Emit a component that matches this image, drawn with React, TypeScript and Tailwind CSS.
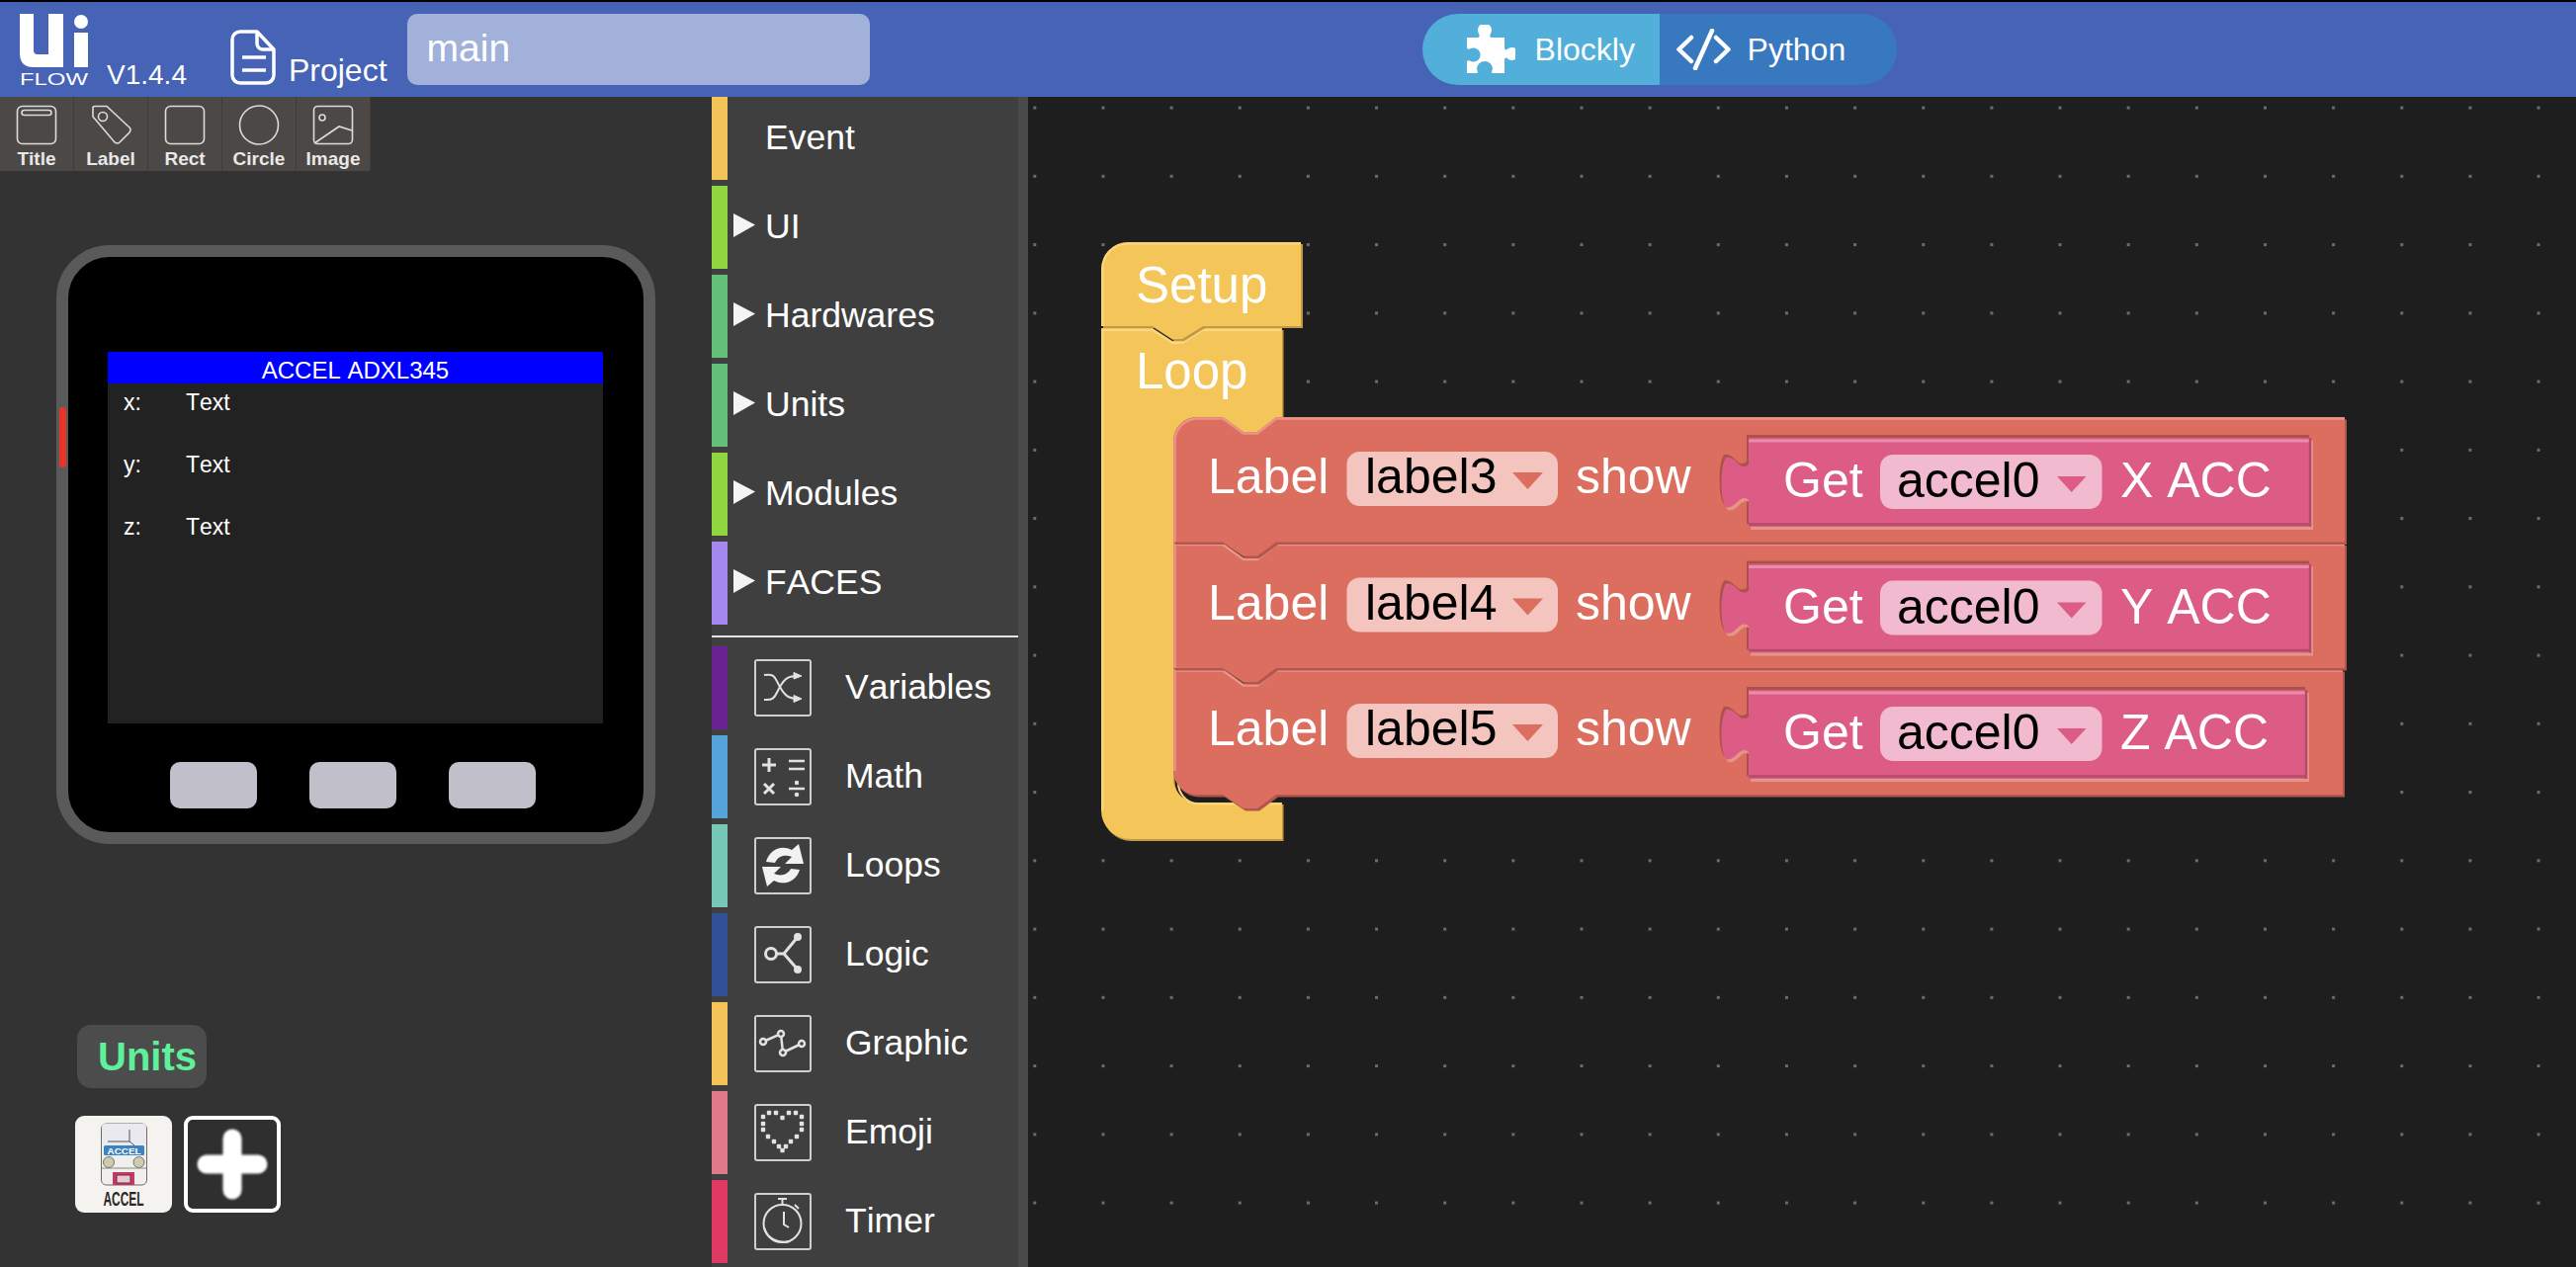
const TILES = [
  { name: "Title", icon: <><rect x="1.5" y="1.5" width="39" height="38" rx="5" /><rect x="6" y="5.5" width="30" height="5" rx="2.5" /></> },
  { name: "Label", icon: <><path d="M3,3 Q3,1.5 5,1.5 H17 L40,23 Q42,25 40,28 L30,38 Q28,40 25,38 L3,12 Z" /><circle cx="13" cy="12" r="4.5" /></> },
  { name: "Rect", icon: <rect x="1.5" y="1.5" width="39" height="38" rx="5" /> },
  { name: "Circle", icon: <circle cx="21" cy="20.5" r="19.5" /> },
  { name: "Image", icon: <><rect x="1.5" y="1.5" width="39" height="38" rx="4" /><circle cx="10" cy="13" r="3" /><path d="M2,39 L27,22 L40,26" /></> },
];

const HEART_DOTS = [
  [15, 9], [22, 9], [35, 9], [42, 9], [9, 13], [28.5, 14], [48, 13], [9, 20], [48, 20], [9, 26], [48, 26],
  [14, 33], [43, 33], [20, 38], [37, 38], [25, 43], [32, 43], [28.5, 47],
];

const CATEGORIES = [
  { name: "Event", color: "bg-[#f4c458]", arrow: false },
  { name: "UI", color: "bg-[#8fd640]", arrow: true },
  { name: "Hardwares", color: "bg-[#64bf78]", arrow: true },
  { name: "Units", color: "bg-[#64bf78]", arrow: true },
  { name: "Modules", color: "bg-[#8fd640]", arrow: true },
  { name: "FACES", color: "bg-[#a587f0]", arrow: true },
];

const TOOLS = [
  {
    name: "Variables",
    color: "bg-[#6a2292]",
    icon: (
      <g fill="none" stroke="#e2e2e2" strokeWidth="2">
        <path d="M10,16 C22,14 21,20 26,28 C31,37 35,40 44,40 M10,41 C22,42 21,36 26,28 C31,19 35,17 44,17" />
        <path d="M40,13.5 L48,17 L40,20 Z M40,36.5 L48,40 L40,43.5 Z" fill="#e2e2e2" strokeWidth="1" />
      </g>
    ),
  },
  {
    name: "Math",
    color: "bg-[#54a4da]",
    icon: (
      <g fill="none" stroke="#e2e2e2" strokeWidth="2.5">
        <path strokeWidth="3" d="M8,17 H22 M15,10 V24 M10,36 L20,46 M20,36 L10,46" />
        <path d="M35,13 H51 M35,21 H51 M35,41 H51" />
        <circle cx="43" cy="35" r="1" />
        <circle cx="43" cy="47" r="1" />
      </g>
    ),
  },
  {
    name: "Loops",
    color: "bg-[#78c8b8]",
    icon: (
      <g fill="#f2f2f2">
        <path d="M12,25 C15,13 27,7 38,13 L45,7 L50,27 L31,27 L38,20 C31,17 24,19 21,26 Z" />
        <path d="M46,33 C43,44 31,50 20,44 L13,50 L8,30 L27,30 L20,37 C27,40 34,38 37,32 Z" />
      </g>
    ),
  },
  {
    name: "Logic",
    color: "bg-[#315096]",
    icon: (
      <g fill="none" stroke="#e2e2e2" strokeWidth="3">
        <circle cx="17" cy="28" r="5.5" />
        <path d="M23,28 H30 L44,11 M30,28 L44,44" />
        <circle cx="44" cy="11" r="2.5" fill="#e2e2e2" />
        <circle cx="44" cy="44" r="2.5" fill="#e2e2e2" />
      </g>
    ),
  },
  {
    name: "Graphic",
    color: "bg-[#f4c458]",
    icon: (
      <g fill="none" stroke="#e2e2e2" strokeWidth="2.5">
        <path d="M9,27 L27,19 L29,38 L48,29" />
        <circle cx="9" cy="27" r="3" fill="#3f3f3f" />
        <circle cx="27" cy="19" r="3" fill="#3f3f3f" />
        <circle cx="29" cy="38" r="3" fill="#3f3f3f" />
        <circle cx="48" cy="29" r="3" fill="#3f3f3f" />
      </g>
    ),
  },
  {
    name: "Emoji",
    color: "bg-[#de7a8a]",
    icon: (
      <g fill="#e2e2e2">
        {HEART_DOTS.map(([x, y]) => (
          <rect key={`${x}-${y}`} x={x - 2.2} y={y - 2.2} width="4.4" height="4.4" rx="1" />
        ))}
      </g>
    ),
  },
  {
    name: "Timer",
    color: "bg-[#de3a64]",
    icon: (
      <g fill="none" stroke="#e2e2e2" strokeWidth="2">
        <circle cx="28.5" cy="31" r="19" />
        <path d="M24,6 H33 M28.5,6 V12 M41,12 L45,16 M30,19 V32 L35,35" />
        <path d="M10,35 C13,46 24,52 36,49" />
      </g>
    ),
  },
];

const ROWS = [
  { label: "label3", axis: "X ACC", right: 2372, pinkRight: 2338 },
  { label: "label4", axis: "Y ACC", right: 2372, pinkRight: 2338 },
  { label: "label5", axis: "Z ACC", right: 2370, pinkRight: 2334 },
];

const ROW_PITCH = 127.5;
const ROW_TOP = 422;

// bloque rojo: muesca arriba, pestaña abajo; primera y última fila con esquina redondeada
function rowPath(top: number, bottom: number, right: number, roundTop: boolean, roundBottom: boolean) {
  const start = roundTop ? `M1187,${top + 24} A24,24 0 0 1 1211,${top}` : `M1187,${top}`;
  const end = roundBottom ? `H1211 A24,24 0 0 1 1187,${bottom - 24}` : "H1187";
  return `${start} H1237 L1258,${top + 15} H1272 L1291,${top} H${right} V${bottom} H1291 L1272,${bottom + 14} H1258 L1237,${bottom} ${end} Z`;
}

function rowHighlight(top: number, bottom: number, right: number, roundTop: boolean) {
  const start = roundTop ? `M1188.5,${bottom} V${top + 24} A23,23 0 0 1 1211,${top + 1.5}` : `M1188.5,${bottom} V${top + 1.5}`;
  return `${start} H1237 L1258,${top + 16.5} H1272 L1291,${top + 1.5} H${right}`;
}

function pinkPath(top: number, right: number) {
  return `M1769,${top} H${right} V${top + 90} H1769 V${top + 63} C1760,${top + 55} 1756,${top + 73} 1746,${top + 70} C1740,${top + 63} 1740,${top + 28} 1746,${top + 20} C1756,${top + 17} 1760,${top + 35} 1769,${top + 27} Z`;
}

function BlockRow({ index }: { index: number }) {
  const row = ROWS[index];
  const top = ROW_TOP + index * ROW_PITCH;
  const bottom = top + ROW_PITCH - 1;
  const isFirst = index === 0;
  const isLast = index === ROWS.length - 1;
  const d = rowPath(top, isLast ? 804 : bottom, row.right, isFirst, isLast);
  const pinkTop = top + 21;
  const pink = pinkPath(pinkTop, row.pinkRight);

  return (
    <g>
      <path d={d} fill="#b2574d" transform="translate(2,2.5)" />
      <path d={d} fill="#dc6e60" />
      <path d={rowHighlight(top, isLast ? 780 : bottom, row.right, isFirst)} fill="none" stroke="#ea9488" strokeWidth="2.5" />
      <text x="1222" y={top + 77} fontSize="50" fill="#fff">Label</text>
      <rect x="1362.5" y={top + 35} width="213.5" height="55" rx="13" fill="#f4c5bf" />
      <text x="1381" y={top + 77} fontSize="50" fill="#000">{row.label}</text>
      <path d={`M1530,${top + 56} H1561 L1545.5,${top + 73} Z`} fill="#dc6e60" />
      <text x="1594" y={top + 77} fontSize="50" fill="#fff">show</text>

      <path d={pink} fill="#a9544b" transform="translate(-2,-3)" />
      <path d={pink} fill="#e89388" transform="translate(2,3)" />
      <path d={pink} fill="#dd5c85" />
      <path d={`M1769,${pinkTop + 3} H${row.pinkRight}`} stroke="#eb8cab" strokeWidth="3" />
      <path d={`M1769,${pinkTop + 87.5} H${row.pinkRight} M${row.pinkRight - 1},${pinkTop} V${pinkTop + 90}`} stroke="#b34b6c" strokeWidth="2.5" fill="none" />
      <text x="1804" y={top + 81} fontSize="50" fill="#fff">Get</text>
      <rect x="1902" y={top + 38} width="224.5" height="55" rx="13" fill="#f1bace" />
      <text x="1919" y={top + 81} fontSize="50" fill="#000">accel0</text>
      <path d={`M2081,${top + 60} H2110.5 L2095.7,${top + 76} Z`} fill="#dd5c85" />
      <text x="2145" y={top + 81} fontSize="50" fill="#fff">{row.axis}</text>
    </g>
  );
}

function Canvas() {
  const setup = "M1114,272 A27,27 0 0 1 1141,245 H1316 V330 H1217 L1196,343 H1186 L1166,330 H1114 Z";
  const loop =
    "M1114,332 H1166 L1186,345 H1196 L1217,332 H1297 V422 H1291 L1272,437 H1258 L1237,422 H1211 A24,24 0 0 0 1187,446 V788 A24,24 0 0 0 1211,812 H1297 V849 H1143 A29,29 0 0 1 1114,820 Z";

  return (
    <svg className="h-full w-full" viewBox="1040 98 1566 1184">
      <defs>
        <pattern id="dots" patternUnits="userSpaceOnUse" x="1045.3" y="107.6" width="69.15" height="69.25">
          <rect width="3" height="3" fill="#6b6b6b" />
        </pattern>
      </defs>
      <rect x="1040" y="98" width="1566" height="1184" fill="url(#dots)" />

      <path d={loop} fill="#c29a45" transform="translate(1.5,2)" />
      <path d={loop} fill="#f4c558" />
      <path d="M1115.5,820 V334 H1166 L1186,347 H1196 L1217,334 H1296" fill="none" stroke="#f8d882" strokeWidth="2" />
      <path d="M1192,790 A22,22 0 0 0 1211,813.5 H1296" fill="none" stroke="#f8d882" strokeWidth="2" />
      <text x="1149" y="393" fontSize="51" fill="#fff">Loop</text>

      <path d={setup} fill="#c29a45" transform="translate(2,2)" />
      <path d={setup} fill="#f4c558" />
      <path d="M1115.5,330 V272 A25.5,25.5 0 0 1 1141,246.5 H1316" fill="none" stroke="#f8d882" strokeWidth="2" />
      <text x="1149" y="306" fontSize="51" fill="#fff">Setup</text>

      <BlockRow index={2} />
      <BlockRow index={1} />
      <BlockRow index={0} />
    </svg>
  );
}

function ToolRow({ tool }: { tool: (typeof TOOLS)[number] }) {
  return (
    <div className="mb-[6px] flex h-[84px] items-center">
      <div className={`h-full w-4 ${tool.color}`} />
      <div className="ml-[27px] h-[58px] w-[58px] rounded-[3px] border-2 border-[#cfcfcf]">
        <svg className="-m-[2px] block h-[58px] w-[58px]" viewBox="0 0 58 58">
          {tool.icon}
        </svg>
      </div>
      <span className="ml-[34px] text-[35.5px] leading-none text-white">{tool.name}</span>
    </div>
  );
}

function Toolbox() {
  return (
    <div className="flex h-full w-[320px] shrink-0 overflow-hidden bg-[#3f3f3f]">
      <div className="w-[310px]">
        {CATEGORIES.map((cat) => (
          <div key={cat.name} className="mb-[6px] flex h-[84px] items-center">
            <div className={`h-full w-4 ${cat.color}`} />
            <div className="flex w-[38px] justify-end pr-[10px]">
              {cat.arrow && (
                <svg className="-mt-1 h-[26px] w-[22px]" viewBox="0 0 22 26">
                  <path d="M0,1 L22,12.5 L0,25 Z" fill="#f4f4f4" />
                </svg>
              )}
            </div>
            <span className="mb-[1px] text-[35.5px] leading-none text-white">{cat.name}</span>
          </div>
        ))}
        <div className="mt-[11px] mb-[9px] h-[2px] bg-[#e4e4e4]" />
        {TOOLS.map((tool) => (
          <ToolRow key={tool.name} tool={tool} />
        ))}
      </div>
      <div className="h-full w-[10px] bg-[#4a4a4a]" />
    </div>
  );
}

function Device() {
  return (
    <div className="relative mt-[75px] ml-[57px] h-[606px] w-[606px] rounded-[54px] border-[12px] border-[#5a5a5a] bg-black">
      <div className="absolute top-[152px] -left-[9px] h-[61px] w-[7px] rounded-[3px] bg-[#e53528]" />
      <div className="mt-[96px] ml-10 h-[376px] w-[501px] bg-[#222]">
        <div className="flex h-[32px] items-end justify-center bg-[#0000ff] text-[24px] leading-[26px] text-white">ACCEL ADXL345</div>
        {["x:", "y:", "z:"].map((axis) => (
          <div key={axis} className="mb-[25px] flex h-[38px] items-center text-[23px] leading-none text-white">
            <span className="ml-4 w-[63px]">{axis}</span>
            <span>Text</span>
          </div>
        ))}
      </div>
      <div className="mt-[39px] ml-[103px] flex gap-[53px]">
        <div className="h-[47px] w-[88px] rounded-[10px] bg-[#c0bfca]" />
        <div className="h-[47px] w-[88px] rounded-[10px] bg-[#c0bfca]" />
        <div className="h-[47px] w-[88px] rounded-[10px] bg-[#c0bfca]" />
      </div>
    </div>
  );
}

function AccelTile() {
  return (
    <svg className="h-[98px] w-[98px] rounded-[9px] bg-[#f5f3ef]" viewBox="0 0 98 98">
      <rect x="26.5" y="8" width="46" height="62" rx="5" fill="#f1efeb" stroke="#6d6b68" strokeWidth="1" />
      <path d="M27,12 Q27,8 31,8 H68 Q72,8 72,12 V29 H27 Z" fill="#e9e9ef" />
      <path d="M33,26 H55 V14 M55,26 L60,30" fill="none" stroke="#555" strokeWidth="1" />
      <rect x="29" y="30" width="41" height="10" rx="1.5" fill="#3a83c4" />
      <text x="49.5" y="38.5" fontSize="9" fontWeight="700" fill="#fff" textAnchor="middle" textLength="34" lengthAdjust="spacingAndGlyphs">ACCEL</text>
      <path d="M27,53 H72" stroke="#8a8884" strokeWidth="1" />
      <circle cx="34" cy="47" r="5.5" fill="#cfcbb0" stroke="#77756c" strokeWidth="1" />
      <circle cx="64.5" cy="47" r="5.5" fill="#cfcbb0" stroke="#77756c" strokeWidth="1" />
      <rect x="38" y="57" width="22" height="13" fill="#c23a66" />
      <rect x="42" y="60" width="14" height="8" fill="#e8c8d0" stroke="#7d2440" strokeWidth="1" />
      <text x="49" y="91" fontSize="20" fontWeight="700" fill="#2a2725" textAnchor="middle" textLength="41" lengthAdjust="spacingAndGlyphs">ACCEL</text>
    </svg>
  );
}

function LeftPanel() {
  return (
    <div className="h-full w-[720px] shrink-0 bg-[#333]">
      <div className="flex">
        {TILES.map((tile) => (
          <div key={tile.name} className="flex h-[75px] w-[75px] flex-col items-center border-r border-[#3f3c3a] bg-[#4c4846] pt-[8px]">
            <svg className="h-[41px] w-[42px]" viewBox="0 0 42 41" fill="none" stroke="#dcdcdc" strokeWidth="1.6">
              {tile.icon}
            </svg>
            <span className="mt-[3px] text-[19px] leading-[22px] font-bold text-[#e8e8e8]">{tile.name}</span>
          </div>
        ))}
      </div>
      <Device />
      <div className="mt-[183px] ml-[78px] flex h-16 w-[131px] items-center rounded-[14px] bg-[#4c4c4c] pl-[21px] text-[40px] leading-none font-bold text-[#5ef09a]">
        Units
      </div>
      <div className="mt-[28px] ml-[76px] flex gap-3">
        <AccelTile />
        <div className="flex h-[98px] w-[98px] items-center justify-center rounded-[9px] border-4 border-white bg-[#2f2f2f]">
          <svg className="h-[72px] w-[72px] blur-[1.2px]" viewBox="0 0 72 72">
            <path d="M36,10 V62 M10,36 H62" stroke="#fff" strokeWidth="19" strokeLinecap="round" />
          </svg>
        </div>
      </div>
    </div>
  );
}

function Header() {
  return (
    <header className="flex h-[98px] shrink-0 border-t-2 border-black bg-[#4663b5] text-white">
      <svg className="mt-[12px] ml-5 h-[76px] w-[72px] shrink-0" viewBox="0 0 72 76">
        <path d="M0,0 H14 V37 Q14,41 18,41 H29 V0 H44 V54 H14 Q0,54 0,40 Z" fill="#fff" />
        <rect x="55" y="19" width="14" height="35" fill="#fff" />
        <circle cx="62" cy="8" r="7" fill="#fff" />
        <text x="0" y="72" fontSize="17" fill="#fff" textLength="69" lengthAdjust="spacingAndGlyphs">FLOW</text>
      </svg>
      <span className="mt-[60px] ml-4 text-[28px] leading-none">V1.4.4</span>
      <svg className="mt-[28px] ml-[44px] h-[56px] w-[46px] shrink-0" viewBox="0 0 46 56" fill="none" stroke="#fff" strokeWidth="3.5" strokeLinejoin="round">
        <path d="M12,2 H27 L44,20 V46 A8,8 0 0 1 36,54 H10 A8,8 0 0 1 2,46 V10 A8,8 0 0 1 10,2 Z" />
        <path d="M27,2 V14 A6,6 0 0 0 33,20 H44" />
        <path d="M12,28 H36 M12,41 H36" />
      </svg>
      <span className="mt-[53px] ml-[13px] text-[32px] leading-none">Project</span>
      <div className="mt-[12px] ml-5 flex h-[72px] w-[468px] items-center rounded-[10px] bg-[#a1b1da] pb-[3px] pl-5 text-[39px] leading-none">main</div>
      <div className="mt-[12px] ml-[559px] flex h-[72px] w-[480px] overflow-hidden rounded-full text-[32px] leading-none">
        <div className="flex w-[240px] items-center bg-[#52afda] pl-11">
          <svg className="h-[50px] w-[50px] shrink-0" viewBox="0 0 50 50">
            <path
              d="M1,13 H12 C14,13 14,11 13,9 A7,7 0 1 1 25,9 C24,11 24,13 26,13 H39 V23 C39,26 41,26 43,24 A6.5,6.5 0 1 1 43,35 C41,33 39,33 39,36 V49 H28 C25,49 26,47 27,45 A8,8 0 1 0 11,45 C12,47 13,49 10,49 H1 V38 C1,36 3,36 5,37 A7,7 0 1 0 5,24 C3,25 1,25 1,23 Z"
              fill="#fff"
            />
          </svg>
          <span className="ml-5">Blockly</span>
        </div>
        <div className="flex w-[240px] items-center bg-[#3878bf] pl-[17px]">
          <svg className="h-[42px] w-[55px] shrink-0" viewBox="0 0 55 42" fill="none" stroke="#fff" strokeWidth="4.5" strokeLinecap="round" strokeLinejoin="round">
            <path d="M15,9 L2.5,21 L15,33 M36,2 L19,40 M40,9 L52.5,21 L40,33" />
          </svg>
          <span className="ml-[17px]">Python</span>
        </div>
      </div>
    </header>
  );
}

export default function App() {
  return (
    <div className="flex h-screen w-full flex-col overflow-hidden bg-[#1e1e1e] font-['Liberation_Sans',Arial,sans-serif] [font-kerning:none]">
      <Header />
      <div className="flex min-h-0 flex-1">
        <LeftPanel />
        <Toolbox />
        <div className="min-w-0 flex-1">
          <Canvas />
        </div>
      </div>
    </div>
  );
}
